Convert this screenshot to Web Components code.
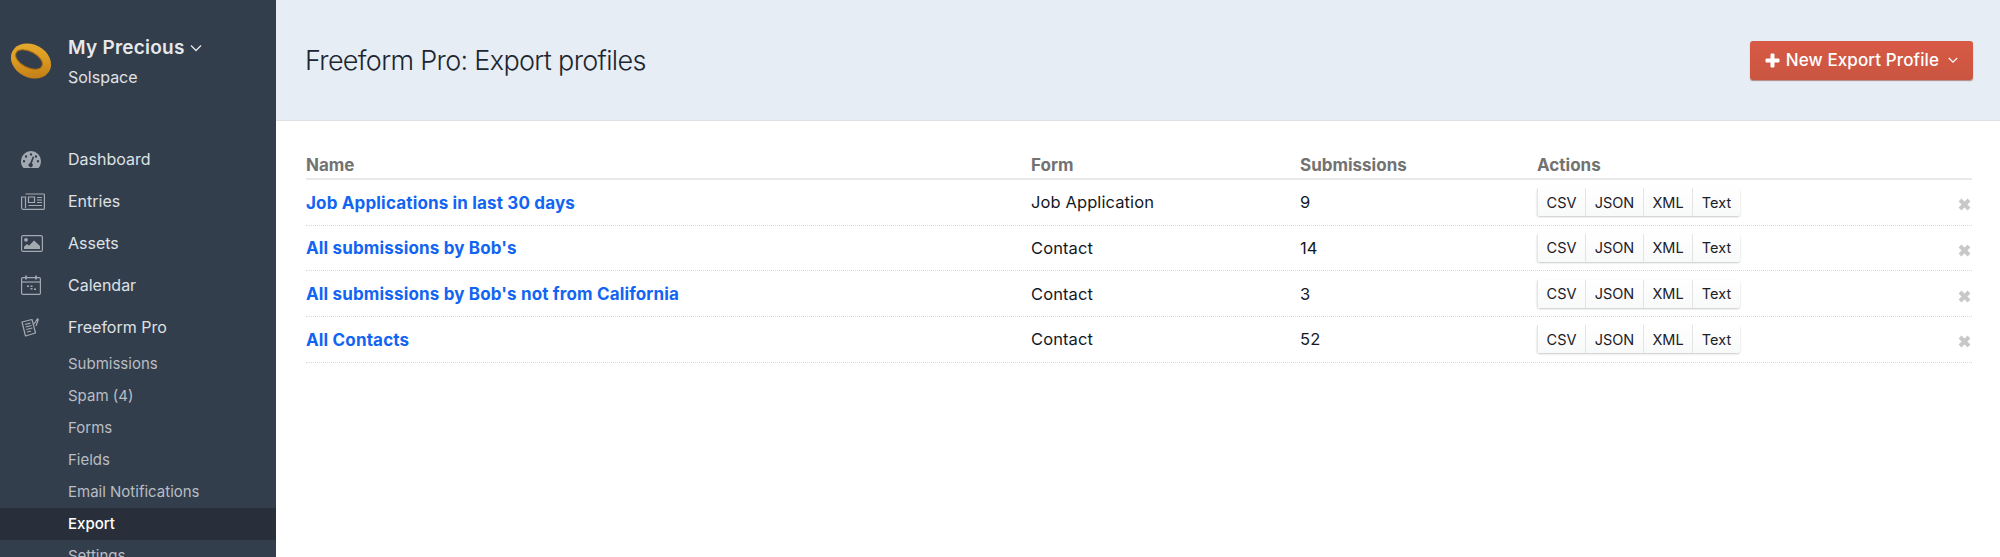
<!DOCTYPE html>
<html lang="en">
  <head>
    <meta charset="UTF-8" />
    <title>Freeform Pro: Export profiles</title>
    <style>
      html, body { margin: 0; height: 557px; overflow: hidden; background: #fff; }
      body { font-family: Inter, "Liberation Sans", sans-serif; }
    </style>
  </head>
  <body>
    <app-shell>
      <side-bar slot="side">
        <nav-item label="Dashboard">
          <svg viewBox="0 0 20 17" width="20" height="17"><path fill="#a3a9b1" fill-rule="evenodd" d="M10 0a10 10 0 0 1 10 10c0 2.300-.7 4.500-1.800 6.300-.3.400-.7.700-1.200.700H3c-.5 0-.9-.3-1.200-.7A10 10 0 0 1 0 10 10 10 0 0 1 10 0zM10 2.200a1.200 1.200 0 1 0 0 2.400 1.200 1.200 0 0 0 0-2.400zM5 4.300a1.200 1.200 0 1 0 0 2.400 1.200 1.200 0 0 0 0-2.400zM15 4.300a1.200 1.200 0 1 0 0 2.400 1.200 1.200 0 0 0 0-2.400zM3 9a1.200 1.200 0 1 0 0 2.400A1.200 1.200 0 0 0 3 9zM17 9a1.200 1.200 0 1 0 0 2.400A1.200 1.200 0 0 0 17 9zM11.800 5.600l-2.700 6.300a2.200 2.200 0 1 0 1.800.3l2.300-6.200z"/></svg>
        </nav-item>
        <nav-item label="Entries">
          <svg viewBox="0 0 24 17" width="24" height="17" fill="none" stroke="#a3a9b1" stroke-width="1.200"><path d="M4.500 1h18.200a.7.700 0 0 1 .7.700v13.600a1 1 0 0 1-1 1H2.200A1.600 1.600 0 0 1 .6 14.700V4h3.900v11"/><path d="M7.500 4h6v5.500h-6zM16 4.500h5M16 7h5M16 9.500h5M7.500 12.500h13.500"/></svg>
        </nav-item>
        <nav-item label="Assets">
          <svg viewBox="0 0 22 17" width="22" height="17"><rect x=".6" y=".6" width="20.800" height="15.800" rx="1.500" fill="none" stroke="#a3a9b1" stroke-width="1.200"/><circle cx="5" cy="4.800" r="1.900" fill="#a3a9b1"/><path fill="#a3a9b1" d="M3 14v-2.200l3-2.800 2 1.800 5-5.300 6 5.500V14z"/></svg>
        </nav-item>
        <nav-item label="Calendar">
          <svg viewBox="0 0 20 20" width="20" height="20" fill="none" stroke="#a3a9b1" stroke-width="1.200"><rect x=".6" y="2.600" width="18.800" height="16.800" rx="1.200"/><path d="M.6 7h18.800"/><path stroke-width="1.700" d="M5 .5v4M15 .5v4"/><path fill="#a3a9b1" stroke="none" d="M6 10.500h2v1.500H6zM9.500 10.500h2V12h-2zM9.500 13h2v1.500h-2zM13 13.500h2V15h-2z"/></svg>
        </nav-item>
        <nav-item label="Freeform Pro">
          <svg viewBox="0 0 18 19" width="18" height="19" fill="none" stroke="#a3a9b1" stroke-width="1.200" stroke-linejoin="round"><path d="M1 4l10-2.500L14.500 15l-10 3z"/><path d="M4 6.500l5.500-1.400M4.600 9l6-1.500M5.300 11.500l6-1.500M6 14l4-1"/><path d="M13 6l3.500-5.200.8.700L15 8"/></svg>
        </nav-item>
        <sub-item>Submissions</sub-item>
        <sub-item>Spam (4)</sub-item>
        <sub-item>Forms</sub-item>
        <sub-item>Fields</sub-item>
        <sub-item>Email Notifications</sub-item>
        <sub-item active>Export</sub-item>
        <sub-item>Settings</sub-item>
      </side-bar>
      <page-header title="Freeform Pro: Export profiles"></page-header>
      <profile-table>
        <profile-row name="Job Applications in last 30 days" form="Job Application" count="9"></profile-row>
        <profile-row name="All submissions by Bob's" form="Contact" count="14"></profile-row>
        <profile-row name="All submissions by Bob's not from California" form="Contact" count="3"></profile-row>
        <profile-row name="All Contacts" form="Contact" count="52"></profile-row>
      </profile-table>
    </app-shell>

    <script>
      class AppShell extends HTMLElement {
        constructor() {
          super()
          this.attachShadow({ mode: "open" }).innerHTML = `
            <style>
              :host { display: grid; grid-template-columns: 276px 1fr; height: 557px; }
              .main { min-width: 0; }
            </style>
            <slot name="side"></slot>
            <div class="main"><slot></slot></div>
          `
        }
      }

      class SideBar extends HTMLElement {
        constructor() {
          super()
          this.attachShadow({ mode: "open" }).innerHTML = `
            <style>
              :host { display: block; height: 557px; overflow: hidden; background: #333e4d; color: #e4e6e9; }
              .brand { display: flex; align-items: center; height: 138px; box-sizing: border-box; padding: 0 0 15px 11px; }
              .ring { width: 41px; height: 37px; margin: 0 16px 0 0; flex: none; }
              .site { font-size: 19px; font-weight: 600; letter-spacing: .25px; line-height: 24px; color: #e6e8ea; display: flex; align-items: center; gap: 5px; }
              .org { font-size: 16px; line-height: 20px; margin-top: 7px; color: #e0e2e5; }
            </style>
            <div class="brand">
              <svg class="ring" viewBox="0 0 41 37">
                <defs>
                  <linearGradient id="gold" x1="0" y1="0" x2=".8" y2="1">
                    <stop offset="0" stop-color="#e9ae35" />
                    <stop offset=".5" stop-color="#dc9c22" />
                    <stop offset="1" stop-color="#bd7a14" />
                  </linearGradient>
                </defs>
                <ellipse cx="20" cy="18" rx="21" ry="16.500" transform="rotate(28 20 18)" fill="url(#gold)" />
                <ellipse cx="18" cy="16.500" rx="14.500" ry="8" transform="rotate(28 18 16.500)" fill="#333e4d" stroke="#a8690f" stroke-width="1" />
              </svg>
              <div>
                <div class="site">My Precious
                  <svg width="12" height="8" viewBox="0 0 12 8" fill="none" stroke="#e6e8ea" stroke-width="1.300"><path d="M1 1.500l5 5 5-5"/></svg>
                </div>
                <div class="org">Solspace</div>
              </div>
            </div>
            <slot></slot>
          `
        }
      }

      class NavItem extends HTMLElement {
        constructor() {
          super()
          this.attachShadow({ mode: "open" }).innerHTML = `
            <style>
              :host { display: flex; align-items: center; height: 42px; font-size: 16px; color: #dfe1e4; }
              .icon { width: 68px; flex: none; display: flex; justify-content: flex-start; padding-left: 21px; box-sizing: border-box; }
            </style>
            <span class="icon"><slot></slot></span>
            <span>${this.getAttribute("label")}</span>
          `
        }
      }

      class SubItem extends HTMLElement {
        constructor() {
          super()
          this.attachShadow({ mode: "open" }).innerHTML = `
            <style>
              :host { display: block; height: 32px; line-height: 32px; padding-left: 68px; font-size: 15px; color: #b9bdc3; }
              :host([active]) { background: #282f3a; color: #fff; font-weight: 500; }
            </style>
            <slot></slot>
          `
        }
      }

      class PageHeader extends HTMLElement {
        constructor() {
          super()
          this.attachShadow({ mode: "open" }).innerHTML = `
            <style>
              :host { display: flex; align-items: center; justify-content: space-between; height: 121px; box-sizing: border-box;
                padding: 0 27px 0 29px; background: #e6edf4; border-bottom: 1px solid #dde1e6; }
              h1 { margin: 0; font-size: 27px; font-weight: 300; letter-spacing: -.67px; color: #1d2530; }
              button { display: flex; align-items: center; gap: 6px; height: 39px; padding: 0 15px; border: 0; border-radius: 3px;
                background: linear-gradient(#d85a46, #c95540); box-shadow: 0 1px 1px rgba(120, 40, 30, .5);
                color: #fff; font: 500 17px Inter, "Liberation Sans", sans-serif; letter-spacing: .1px; }
            </style>
            <h1>${this.getAttribute("title")}</h1>
            <button>
              <svg width="15" height="15" viewBox="0 0 15 15"><path fill="#fff" d="M5.500 1.500a1 1 0 0 1 1-1h2a1 1 0 0 1 1 1v4h4a1 1 0 0 1 1 1v2a1 1 0 0 1-1 1h-4v4a1 1 0 0 1-1 1h-2a1 1 0 0 1-1-1v-4h-4a1 1 0 0 1-1-1v-2a1 1 0 0 1 1-1h4z"/></svg>
              <span>New Export Profile</span>
              <svg width="10" height="7" viewBox="0 0 10 7" fill="none" stroke="#fff" stroke-width="1.200" style="margin-left:3px"><path d="M.8 1l4.200 4.200L9.200 1"/></svg>
            </button>
          `
        }
      }

      const COLS = "725px 269px 237px 1fr"

      class ProfileTable extends HTMLElement {
        constructor() {
          super()
          this.attachShadow({ mode: "open" }).innerHTML = `
            <style>
              :host { display: block; padding: 32px 28px 0 30px; }
              .head { display: grid; grid-template-columns: ${COLS}; height: 27px; line-height: 24px; box-sizing: border-box;
                border-bottom: 2px solid #e9e9e9; font-size: 17px; font-weight: 700; color: #727272; }
            </style>
            <div class="head"><span>Name</span><span>Form</span><span>Submissions</span><span>Actions</span></div>
            <slot></slot>
          `
        }
      }

      class ProfileRow extends HTMLElement {
        constructor() {
          super()
          this.attachShadow({ mode: "open" }).innerHTML = `
            <style>
              :host { display: grid; grid-template-columns: ${COLS}; align-items: center; height: 45.670px; box-sizing: border-box;
                border-bottom: 1px dotted #d9d9d9; font-size: 16.500px; letter-spacing: .1px; color: #14191f; }
              a { color: #1264f3; font-size: 17px; font-weight: 700; text-decoration: none; letter-spacing: .16px; padding-top: 1px; }
              .actions { display: flex; align-items: center; justify-content: space-between; }
              .del { margin: 5px 1px 0 0; }
            </style>
            <a href="#">${this.getAttribute("name")}</a>
            <span>${this.getAttribute("form")}</span>
            <span>${this.getAttribute("count")}</span>
            <div class="actions">
              <btn-group></btn-group>
              <svg class="del" width="13" height="13" viewBox="0 0 13 13"><path fill="none" stroke="#c8c8c8" stroke-width="4" d="M2 2l9 9M11 2l-9 9"/></svg>
            </div>
          `
        }
      }

      class BtnGroup extends HTMLElement {
        constructor() {
          super()
          const labels = ["CSV", "JSON", "XML", "Text"]
          this.attachShadow({ mode: "open" }).innerHTML = `
            <style>
              :host { display: inline-flex; height: 28px; border-radius: 3px; background: linear-gradient(#fff, #f8f9f9);
                box-shadow: 0 1px 2px rgba(0, 0, 0, .22); font-size: 14.500px; letter-spacing: 0; color: #1b2027; }
              span { display: flex; align-items: center; padding: 0 8.600px; border-left: 1px solid #e4e4e4; }
              span:first-child { border-left: 0; }
            </style>
            ${labels.map((l) => `<span>${l}</span>`).join("")}
          `
        }
      }

      customElements.define("app-shell", AppShell)
      customElements.define("side-bar", SideBar)
      customElements.define("nav-item", NavItem)
      customElements.define("sub-item", SubItem)
      customElements.define("page-header", PageHeader)
      customElements.define("profile-table", ProfileTable)
      customElements.define("profile-row", ProfileRow)
      customElements.define("btn-group", BtnGroup)
    </script>
  </body>
</html>
